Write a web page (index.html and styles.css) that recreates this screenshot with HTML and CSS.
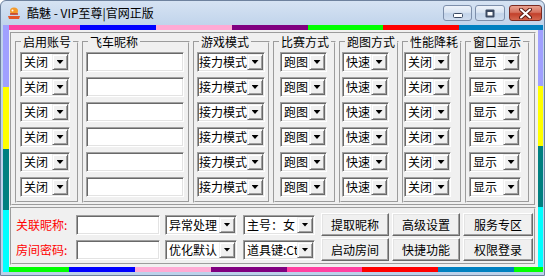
FILE: index.html
```html
<!DOCTYPE html>
<html lang="zh-CN">
<head>
  <meta charset="UTF-8">
  <meta name="viewport" content="width=device-width, initial-scale=1.0">
  <title>酷魅 - VIP至尊|官网正版</title>
  <link rel="stylesheet" href="styles.css">
</head>
<body>
  <div class="window">
    <!-- Title bar -->
    <header class="titlebar">
      <svg class="app-icon" width="16" height="16" viewBox="0 0 16 16">
        <ellipse cx="8" cy="6" rx="4" ry="3.5" fill="#f39a2c"/>
        <path d="M2 11h12l-1 3H3z" fill="#e2572b"/>
        <path d="M4 9h8" stroke="#c0392b" stroke-width="1.5"/>
        <circle cx="6.5" cy="5.5" r="1" fill="#fff"/>
      </svg>
      <span class="title">酷魅 - VIP至尊|官网正版</span>
      <div class="caption">
        <button class="cap cap-min">
          <svg width="10" height="5" viewBox="0 0 10 5"><rect x="0.5" y="0.5" width="9" height="4" rx="1" fill="#fff" stroke="#3b4a63"/></svg>
        </button>
        <button class="cap cap-max">
          <svg width="10" height="9" viewBox="0 0 10 9"><rect x="0.5" y="0.5" width="9" height="8" rx="1" fill="#3b4a63"/><rect x="2.5" y="3" width="5" height="3.5" fill="#fff"/></svg>
        </button>
        <button class="cap cap-close">
          <svg width="13" height="11" viewBox="0 0 13 11"><path d="M2 1.5l9 8M11 1.5l-9 8" stroke="#5a1a12" stroke-width="4" stroke-linecap="round"/><path d="M2 1.5l9 8M11 1.5l-9 8" stroke="#fff" stroke-width="2" stroke-linecap="round"/></svg>
        </button>
      </div>
    </header>

    <!-- Client area inside the coloured frame -->
    <div class="client">
      <div class="bar bar-left">
        <i class="c-lavender"></i><i class="c-yellow"></i><i class="c-teal"></i><i class="c-cyan"></i>
      </div>
      <div class="bar bar-right">
        <i class="c-lavender"></i><i class="c-yellow"></i><i class="c-teal"></i><i class="c-cyan"></i>
      </div>
      <div class="bar bar-top">
        <i class="c-pink"></i><i class="c-blue"></i><i class="c-lightpink"></i><i class="c-purple"></i><i class="c-green"></i><i class="c-red"></i><i class="c-steel"></i>
      </div>
      <div class="bar bar-bottom">
        <i class="c-green"></i><i class="c-blue"></i><i class="c-lightpink"></i><i class="c-purple"></i><i class="c-pink"></i><i class="c-red"></i><i class="c-steel"></i><i class="c-green"></i>
      </div>

      <main class="content">
        <!-- Account table -->
        <section class="panel accounts">
          <fieldset class="group g-acct">
            <legend>启用账号</legend>
            <div class="rows">
              <div class="combo"><span>关闭</span><b class="drop"></b></div>
              <div class="combo"><span>关闭</span><b class="drop"></b></div>
              <div class="combo"><span>关闭</span><b class="drop"></b></div>
              <div class="combo"><span>关闭</span><b class="drop"></b></div>
              <div class="combo"><span>关闭</span><b class="drop"></b></div>
              <div class="combo"><span>关闭</span><b class="drop"></b></div>
            </div>
          </fieldset>
          <fieldset class="group g-name">
            <legend>飞车昵称</legend>
            <div class="rows">
              <div class="field"></div>
              <div class="field"></div>
              <div class="field"></div>
              <div class="field"></div>
              <div class="field"></div>
              <div class="field"></div>
            </div>
          </fieldset>
          <fieldset class="group g-mode">
            <legend>游戏模式</legend>
            <div class="rows">
              <div class="combo"><span>接力模式</span><b class="drop"></b></div>
              <div class="combo"><span>接力模式</span><b class="drop"></b></div>
              <div class="combo"><span>接力模式</span><b class="drop"></b></div>
              <div class="combo"><span>接力模式</span><b class="drop"></b></div>
              <div class="combo"><span>接力模式</span><b class="drop"></b></div>
              <div class="combo"><span>接力模式</span><b class="drop"></b></div>
            </div>
          </fieldset>
          <fieldset class="group g-race">
            <legend>比赛方式</legend>
            <div class="rows">
              <div class="combo"><span>跑图</span><b class="drop"></b></div>
              <div class="combo"><span>跑图</span><b class="drop"></b></div>
              <div class="combo"><span>跑图</span><b class="drop"></b></div>
              <div class="combo"><span>跑图</span><b class="drop"></b></div>
              <div class="combo"><span>跑图</span><b class="drop"></b></div>
              <div class="combo"><span>跑图</span><b class="drop"></b></div>
            </div>
          </fieldset>
          <fieldset class="group g-run">
            <legend>跑图方式</legend>
            <div class="rows">
              <div class="combo"><span>快速</span><b class="drop"></b></div>
              <div class="combo"><span>快速</span><b class="drop"></b></div>
              <div class="combo"><span>快速</span><b class="drop"></b></div>
              <div class="combo"><span>快速</span><b class="drop"></b></div>
              <div class="combo"><span>快速</span><b class="drop"></b></div>
              <div class="combo"><span>快速</span><b class="drop"></b></div>
            </div>
          </fieldset>
          <fieldset class="group g-perf">
            <legend>性能降耗</legend>
            <div class="rows">
              <div class="combo"><span>关闭</span><b class="drop"></b></div>
              <div class="combo"><span>关闭</span><b class="drop"></b></div>
              <div class="combo"><span>关闭</span><b class="drop"></b></div>
              <div class="combo"><span>关闭</span><b class="drop"></b></div>
              <div class="combo"><span>关闭</span><b class="drop"></b></div>
              <div class="combo"><span>关闭</span><b class="drop"></b></div>
            </div>
          </fieldset>
          <fieldset class="group g-win">
            <legend>窗口显示</legend>
            <div class="rows">
              <div class="combo"><span>显示</span><b class="drop"></b></div>
              <div class="combo"><span>显示</span><b class="drop"></b></div>
              <div class="combo"><span>显示</span><b class="drop"></b></div>
              <div class="combo"><span>显示</span><b class="drop"></b></div>
              <div class="combo"><span>显示</span><b class="drop"></b></div>
              <div class="combo"><span>显示</span><b class="drop"></b></div>
            </div>
          </fieldset>
        </section>

        <!-- Bottom controls -->
        <section class="panel controls">
          <div class="ctl-row">
            <label class="ctl-label">关联昵称:</label>
            <div class="field ctl-input"></div>
            <div class="combo ctl-combo"><span>异常处理</span><b class="drop"></b></div>
            <div class="combo ctl-combo"><span>主号：女</span><b class="drop"></b></div>
            <button class="btn">提取昵称</button>
            <button class="btn">高级设置</button>
            <button class="btn btn-wide">服务专区</button>
          </div>
          <div class="ctl-row">
            <label class="ctl-label">房间密码:</label>
            <div class="field ctl-input"></div>
            <div class="combo ctl-combo"><span>优化默认</span><b class="drop"></b></div>
            <div class="combo ctl-combo"><span>道具键:Ctrl</span><b class="drop"></b></div>
            <button class="btn">启动房间</button>
            <button class="btn">快捷功能</button>
            <button class="btn btn-wide">权限登录</button>
          </div>
        </section>
      </main>
    </div>
  </div>
</body>
</html>
```
FILE: styles.css
```css
/* Window chrome */
* {
  box-sizing: border-box;
}

body {
  margin: 0;
  font-family: "Noto Sans CJK SC", "Noto Sans", sans-serif;
  font-size: 12px;
  color: #000;
  background: #fff;
}

.window {
  width: 545px;
  height: 276px;
  display: flex;
  flex-direction: column;
  padding: 0 1px 3px 2px;
  border: 1px solid #6e829e;
  border-radius: 6px 6px 0 0;
  background: linear-gradient(#d6e3f3, #c1d4eb 24px, #bcd1ea);
}

.titlebar {
  height: 24px;
  display: flex;
  align-items: center;
  flex-shrink: 0;
}

.app-icon {
  margin-left: 3px;
}

.title {
  margin-left: 5px;
  line-height: 14px;
}

.caption {
  margin-left: auto;
  align-self: flex-start;
  padding-top: 4px;
  display: flex;
}

.cap {
  height: 16px;
  padding: 0;
  display: flex;
  align-items: center;
  justify-content: center;
  border: 1px solid #7d8fab;
  border-radius: 3px;
  background: linear-gradient(#eef3fa, #d9e4f2 45%, #c3d4ea 55%, #d0def0);
}

.cap-min {
  width: 29px;
  padding-top: 5px;
}

.cap-max {
  width: 30px;
  margin-left: 3px;
}

.cap-close {
  width: 33px;
  margin-left: 4px;
  margin-right: 1px;
  border-color: #7a2a22;
  background: linear-gradient(#eaa291, #d5725f 45%, #c2402b 55%, #d4674f);
}

/* Coloured frame round the client area */
.client {
  flex: 1;
  display: grid;
  grid-template-columns: 6px 1fr 5px;
  grid-template-rows: 5px 1fr 5px;
}

.bar {
  display: flex;
}

.bar i {
  flex: 1;
}

.bar-left {
  grid-column: 1;
  grid-row: 1 / 4;
  flex-direction: column;
}

.bar-right {
  grid-column: 3;
  grid-row: 1 / 3;
  flex-direction: column;
}

.bar-top {
  grid-column: 2 / 4;
  grid-row: 1;
  display: grid;
  grid-template-columns: 71px 76px 76px 76px 75px 76px 1fr;
}

.bar-bottom {
  grid-column: 2 / 4;
  grid-row: 3;
  display: grid;
  grid-template-columns: 60px 66px 76px 76px 75px 76px 76px 1fr;
}

.c-lavender { background: #a0a0ff; }
.c-yellow { background: #ffff00; }
.c-teal { background: #008080; }
.c-cyan { background: #00ffff; }
.c-pink { background: #ff40a0; }
.c-blue { background: #0000ff; }
.c-lightpink { background: #ffaad4; }
.c-purple { background: #800080; }
.c-green { background: #00ff00; }
.c-red { background: #ff0000; }
.c-steel { background: #0080c0; }

.content {
  grid-column: 2;
  grid-row: 2;
  background: #f0f0f0;
  padding: 2px 2px 0 1px;
  display: flex;
  flex-direction: column;
  gap: 1px;
}

/* Etched frames */
.panel {
  border: 2px groove #f0f0f0;
}

.accounts {
  height: 174px;
  display: flex;
  gap: 3px;
  padding: 1px 0 0 3px;
}

.group {
  margin: 0;
  padding: 0;
  min-width: 0;
  height: 168px;
  border: 2px groove #f0f0f0;
}

.group legend {
  margin-left: 4px;
  padding: 0 2px;
  line-height: 14px;
}

.rows {
  display: flex;
  flex-direction: column;
  gap: 5px;
  padding-top: 3px;
}

.g-acct { width: 64px; }
.g-acct .rows { padding-left: 3px; }
.g-acct .combo { width: 50px; }

.g-name { width: 108px; }
.g-name .rows { padding-left: 2px; }
.g-name .field { width: 98px; }

.g-mode { width: 77px; }
.g-mode .rows { padding-left: 2px; }
.g-mode .combo { width: 68px; }
.g-mode .combo span { padding-left: 1px; }

.g-race { width: 63px; }
.g-race .rows { padding-left: 5px; }
.g-race .combo { width: 47px; }

.g-run { width: 60px; }
.g-run .rows { padding-left: 1px; }
.g-run .combo { width: 47px; }

.g-perf { width: 60px; }
.g-perf .combo { width: 47px; }

.g-win { width: 65px; }
.g-win .rows { padding-left: 2px; }
.g-win .combo { width: 52px; }

/* Sunken edit and combo boxes */
.field,
.combo {
  height: 20px;
  display: flex;
  background: #fff;
  border: 1px solid;
  border-color: #a0a0a0 #fff #fff #a0a0a0;
  box-shadow: inset 1px 1px 0 #696969, inset -1px -1px 0 #e3e3e3;
}

.combo span {
  flex: 1;
  min-width: 0;
  padding-left: 3px;
  line-height: 18px;
  white-space: nowrap;
  overflow: hidden;
}

.drop {
  width: 16px;
  height: 16px;
  margin: 1px 1px 1px 0;
  display: flex;
  align-items: center;
  justify-content: center;
  flex-shrink: 0;
  background: #f0f0f0;
  border: 1px solid;
  border-color: #f0f0f0 #696969 #696969 #f0f0f0;
  box-shadow: inset 1px 1px 0 #fff, inset -1px -1px 0 #a0a0a0;
}

.drop::after {
  content: "";
  width: 7px;
  height: 4px;
  background: #000;
  clip-path: polygon(0 0, 100% 0, 50% 100%);
}

/* Bottom control rows */
.controls {
  height: 58px;
  padding: 3px 0 0 4px;
}

.ctl-row {
  height: 25px;
  display: flex;
  align-items: center;
}

.ctl-label {
  width: 60px;
  color: #ff0000;
}

.ctl-input {
  width: 84px;
}

.ctl-combo {
  width: 72px;
  margin-left: 5px;
}

.ctl-combo + .ctl-combo {
  margin-left: 6px;
}

.btn {
  width: 68px;
  height: 23px;
  margin-left: 3px;
  padding: 0;
  font: inherit;
  color: #000;
  background: #f0f0f0;
  border: 1px solid;
  border-color: #fff #696969 #696969 #fff;
  box-shadow: inset -1px -1px 0 #a0a0a0, inset 1px 1px 0 #e3e3e3;
}

.ctl-combo + .btn {
  margin-left: 6px;
}

.btn-wide {
  width: 70px;
}
```
